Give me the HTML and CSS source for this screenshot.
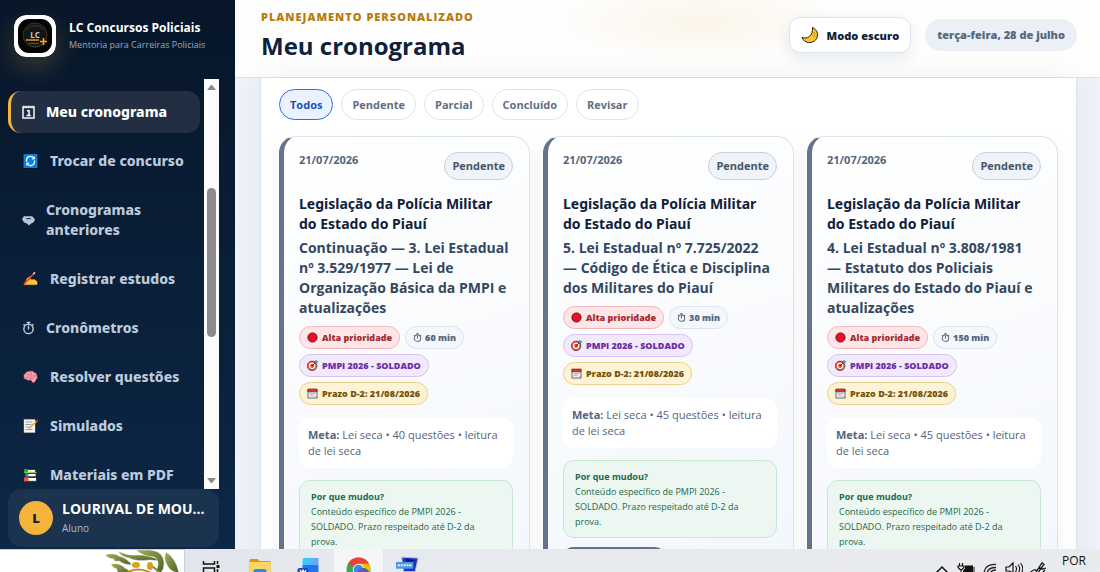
FILE: index.html
```html
<!DOCTYPE html>
<html lang="pt-BR">
<head>
  <meta charset="UTF-8">
  <meta name="viewport" content="width=device-width, initial-scale=1">
  <title>Meu cronograma</title>
  <link rel="stylesheet" href="styles.css">
</head>
<body>

<!-- icones reutilizados nos cartões -->
<svg class="sprite" aria-hidden="true">
  <symbol id="i-red" viewBox="0 0 12 12"><circle cx="6" cy="6" r="5" fill="#e81224" stroke="#5a0a10"/></symbol>
  <symbol id="i-timer" viewBox="0 0 14 14">
    <g fill="none" stroke="currentColor" stroke-width="1.6"><circle cx="7" cy="8" r="5"/><path d="M7 8.5V4.5M7 3V1M5 1h4M11 3l1.4 1.2M3 3L1.6 4.2"/></g>
  </symbol>
  <symbol id="i-target" viewBox="0 0 12 12">
    <circle cx="5.6" cy="6.4" r="5.2" fill="#e8432e" stroke="#3b1a1a" stroke-width=".6"/><circle cx="5.6" cy="6.4" r="3.6" fill="#fff"/><circle cx="5.6" cy="6.4" r="2.2" fill="#e8432e"/>
    <path d="M5.6 6.4L10 2" stroke="#222" stroke-width=".9"/><path d="M8.4 3.6V1.6L10 .2l.4 1.4 1.4.4-1.4 1.6z" fill="#31b6e7" stroke="#222" stroke-width=".4"/>
  </symbol>
  <symbol id="i-cal" viewBox="0 0 12 12">
    <path d="M1 1.500h10v9.500H1z" fill="#e9e9ee" stroke="#444" stroke-width=".8"/><path d="M1 1.200h10v3H1z" fill="#d93a2b" stroke="#5a1a12" stroke-width=".6"/>
    <path d="M3 6h6M3 8h4" stroke="#a9a9b2" stroke-width=".9"/><path d="M11 8v3H8z" fill="#9a9aa2"/>
  </symbol>
</svg>

<div class="app">
  <aside class="sidebar">
    <div class="brand">
      <svg class="logo" viewBox="0 0 42 42" role="img" aria-label="LC">
        <rect width="42" height="42" rx="12" fill="#fff"/>
        <rect x="4" y="4" width="34" height="34" rx="11" fill="#050505"/>
        <circle cx="21" cy="20" r="12" fill="#151515" stroke="#4b3d1c" stroke-width=".8"/>
        <path d="M12 15q9-9 18 0M13 29q8 6 16 0" fill="none" stroke="#3c3c3c"/>
        <text x="21" y="23" text-anchor="middle" class="logo-lc">LC</text>
        <path d="M12 25h13" stroke="#c98a14" stroke-width="2" stroke-dasharray="2 .4"/>
        <path d="M15 28.500h10" stroke="#555" stroke-width="1"/>
        <path d="M26 26.500h7M29.500 23v7" stroke="#f5b021" stroke-width="1.600"/>
      </svg>
      <div class="brand-text">
        <strong>LC Concursos Policiais</strong>
        <span>Mentoria para Carreiras Policiais</span>
      </div>
    </div>

    <div class="menu">
      <nav class="nav">
        <a href="#" class="active">
          <svg class="ico small" viewBox="0 0 13 14"><rect x="1" y="2" width="11" height="11" fill="none" stroke="#e9edf2" stroke-width="1.600"/><path d="M1 2h11" stroke="#e9edf2" stroke-width="2.400" stroke-dasharray="1.500 .8"/><path d="M5 5.800h2v4.500M4.500 10.500h4.200" fill="none" stroke="#fff" stroke-width="1.500"/></svg>
          Meu cronograma
        </a>
        <a href="#">
          <svg class="ico" viewBox="0 0 16 16"><rect x=".5" y=".5" width="15" height="15" fill="#0b7fe0" stroke="#03101f"/><path d="M4 8.800V7a4 4 0 0 1 7.500-1.500M12 7.500V9a4 4 0 0 1-7.500 1.500" fill="none" stroke="#fff" stroke-width="1.300"/><path d="M11.800 3.500V6H9.300M4.200 12.500V10h2.500" fill="none" stroke="#fff"/></svg>
          Trocar de concurso
        </a>
        <a href="#">
          <svg class="ico small" viewBox="0 0 14 14"><path d="M2 3h9l3 3.500-1.500 3-3 1.500-2 2-2-2-3.500-1.500L0 6z" fill="#b9c6d6"/><path d="M4.500 5.500h5" stroke="#22344c" stroke-width="1.200"/></svg>
          Cronogramas anteriores
        </a>
        <a href="#">
          <svg class="ico" viewBox="0 0 16 16"><path d="M.8 14.200L4 7l4-2.500 1.500 1.500L8 8h4l3.200 2.500v3.700z" fill="#ffc83d" stroke="#1d1405" stroke-width=".8"/><path d="M1.500 13L11 3" stroke="#e03a24" stroke-width="1.800"/><path d="M10.800 3.200L12.500 1.300" stroke="#ddd" stroke-width="1.600"/></svg>
          Registrar estudos
        </a>
        <a href="#">
          <svg class="ico small"><use href="#i-timer"/></svg>
          Cronômetros
        </a>
        <a href="#">
          <svg class="ico" viewBox="0 0 16 16"><path d="M1 8Q.5 5 3 4q1-2.500 4-2 3-1 4.500 1 3 .5 3 3 1.500 3-.8 5-.5 2.500-2.700 3-2 0-2.500-2.500-3 .8-4.500-.8Q1 10.500 1 8z" fill="#f59fb0" stroke="#4a1b25" stroke-width=".8"/><path d="M4 5.500q2-.5 3 1t3 .3M8 3q-.5 2 1.500 2.500M3 8.500q2-1 3.500.5t4 0M12 5.500q-1 2 .5 3" fill="none" stroke="#c9647c" stroke-width=".9"/></svg>
          Resolver questões
        </a>
        <a href="#">
          <svg class="ico" viewBox="0 0 16 16"><path d="M1 1h12v14H1z" fill="#f2f2f2" stroke="#222" stroke-width=".7"/><path d="M3 4h7M3 6.500h6M3 9h4M3 11.500h7" stroke="#9aa0a8"/><path d="M6.500 10.500L14 3.500" stroke="#e8a92c" stroke-width="1.700"/><path d="M14 3.500l1.300-1.200" stroke="#d7455b" stroke-width="1.700"/></svg>
          Simulados
        </a>
        <a href="#">
          <svg class="ico" viewBox="0 0 16 16"><path d="M2 2.500h11v3H2z" fill="#fff" stroke="#151515" stroke-width=".7"/><path d="M1.500 2h4v3.500h-4z" fill="#1fa34a"/><path d="M2 5.500h12" stroke="#a6c93b" stroke-width="1.500"/><path d="M3 6.500h10.500v3.200H3z" fill="#fff" stroke="#151515" stroke-width=".7"/><path d="M3 6.500h3v3.200H3z" fill="#3a8bbd"/><path d="M1.500 10.500H14v3.800H1.500z" fill="#fff" stroke="#151515" stroke-width=".7"/><path d="M1.500 10.500H6v3.800H1.500z" fill="#f0572b"/></svg>
          Materiais em PDF
        </a>
      </nav>
      <div class="scrollbar" aria-hidden="true">
        <i class="up"></i>
        <i class="thumb"></i>
        <i class="down"></i>
      </div>
    </div>

    <div class="user">
      <span class="avatar">L</span>
      <div class="user-text">
        <strong>LOURIVAL DE MOU...</strong>
        <span>Aluno</span>
      </div>
    </div>
  </aside>

  <main class="main">
    <header class="topbar">
      <div>
        <p class="eyebrow">PLANEJAMENTO PERSONALIZADO</p>
        <h1>Meu cronograma</h1>
      </div>
      <div class="topbar-right">
        <button type="button" class="theme-btn">
          <svg viewBox="0 0 18 18"><path d="M11.500 1.500C17 4 18 10 14.500 14 10.500 18 3.500 17.500 1 11.500 6 13.500 12.500 10 11.500 1.500z" fill="#ffc531" stroke="#2b2005" stroke-width="1"/><path d="M13 6q1.500 3-.5 5.500" fill="none" stroke="#e39c1c" stroke-width="1.200"/></svg>
          Modo escuro
        </button>
        <span class="date-pill">terça-feira, 28 de julho</span>
      </div>
    </header>

    <section class="panel">
      <div class="filters">
        <button type="button" class="active">Todos</button>
        <button type="button">Pendente</button>
        <button type="button">Parcial</button>
        <button type="button">Concluído</button>
        <button type="button">Revisar</button>
      </div>

      <div class="cards">
        <article class="card">
          <div class="card-top"><time datetime="2026-07-21">21/07/2026</time><span class="status">Pendente</span></div>
          <h3>Legislação da Polícia Militar do Estado do Piauí</h3>
          <h4>Continuação — 3. Lei Estadual nº 3.529/1977 — Lei de Organização Básica da PMPI e atualizações</h4>
          <div class="chips">
            <span class="chip red"><svg><use href="#i-red"/></svg>Alta prioridade</span>
            <span class="chip time"><svg><use href="#i-timer"/></svg>60 min</span>
            <span class="chip purple"><svg><use href="#i-target"/></svg>PMPI 2026 - SOLDADO</span>
            <span class="chip yellow"><svg><use href="#i-cal"/></svg>Prazo D-2: 21/08/2026</span>
          </div>
          <p class="goal"><b>Meta:</b> Lei seca • 40 questões • leitura de lei seca</p>
          <div class="why"><strong>Por que mudou?</strong>Conteúdo específico de PMPI 2026 - SOLDADO. Prazo respeitado até D-2 da prova.</div>
          <button type="button" class="start" aria-label="Iniciar"></button>
        </article>

        <article class="card">
          <div class="card-top"><time datetime="2026-07-21">21/07/2026</time><span class="status">Pendente</span></div>
          <h3>Legislação da Polícia Militar do Estado do Piauí</h3>
          <h4>5. Lei Estadual nº 7.725/2022 — Código de Ética e Disciplina dos Militares do Piauí</h4>
          <div class="chips">
            <span class="chip red"><svg><use href="#i-red"/></svg>Alta prioridade</span>
            <span class="chip time"><svg><use href="#i-timer"/></svg>30 min</span>
            <span class="chip purple"><svg><use href="#i-target"/></svg>PMPI 2026 - SOLDADO</span>
            <span class="chip yellow"><svg><use href="#i-cal"/></svg>Prazo D-2: 21/08/2026</span>
          </div>
          <p class="goal"><b>Meta:</b> Lei seca • 45 questões • leitura de lei seca</p>
          <div class="why"><strong>Por que mudou?</strong>Conteúdo específico de PMPI 2026 - SOLDADO. Prazo respeitado até D-2 da prova.</div>
          <button type="button" class="start" aria-label="Iniciar"></button>
        </article>

        <article class="card">
          <div class="card-top"><time datetime="2026-07-21">21/07/2026</time><span class="status">Pendente</span></div>
          <h3>Legislação da Polícia Militar do Estado do Piauí</h3>
          <h4>4. Lei Estadual nº 3.808/1981 — Estatuto dos Policiais Militares do Estado do Piauí e atualizações</h4>
          <div class="chips">
            <span class="chip red"><svg><use href="#i-red"/></svg>Alta prioridade</span>
            <span class="chip time"><svg><use href="#i-timer"/></svg>150 min</span>
            <span class="chip purple"><svg><use href="#i-target"/></svg>PMPI 2026 - SOLDADO</span>
            <span class="chip yellow"><svg><use href="#i-cal"/></svg>Prazo D-2: 21/08/2026</span>
          </div>
          <p class="goal"><b>Meta:</b> Lei seca • 45 questões • leitura de lei seca</p>
          <div class="why"><strong>Por que mudou?</strong>Conteúdo específico de PMPI 2026 - SOLDADO. Prazo respeitado até D-2 da prova.</div>
          <button type="button" class="start" aria-label="Iniciar"></button>
        </article>
      </div>
    </section>
  </main>
</div>

<!-- barra de tarefas -->
<footer class="taskbar">
  <div class="search">
    <svg viewBox="0 0 80 23">
      <defs><linearGradient id="leaf" x1="0" y1="0" x2="1" y2="1"><stop offset="0" stop-color="#a3ae5e"/><stop offset="1" stop-color="#4c5f22"/></linearGradient></defs>
      <g fill="url(#leaf)" stroke="#fff" stroke-width=".5">
        <path d="M1 5q8-3 14 1 8 2 13 9-8 0-13-4Q9 12 10 9 5 9 1 5z"/>
        <path d="M7 14q8-2 14 4 5 2 6 6h-9q-6-1-5-5-5-1-6-5z"/>
        <path d="M14 1q9 5 20 4 12-1 22 6l-10-1q-14 2-21-2-8-1-11-7z"/>
        <path d="M32 0h14q13 1 14 12 1 7-4 12l-4-3q5-10-2-14-10 0-18-7z"/>
        <path d="M62 2q10 6 13 21-9-1-12-8-4-6-1-13z"/>
      </g>
      <path d="M22 23q12-7 25 0" fill="none" stroke="#b8861c" stroke-width="2"/>
      <path d="M47 16q5 2 8 7" fill="none" stroke="#8a9440" stroke-width="2"/>
      <ellipse cx="32" cy="15" rx="4" ry="3" fill="#d9a514"/><ellipse cx="46" cy="16" rx="3" ry="4" fill="#d2a01a"/>
    </svg>
  </div>
  <div class="apps">
    <span><svg viewBox="0 0 20 23"><g fill="none" stroke="#111" stroke-width="1.500"><path d="M2 12v3h11v-3M2 24v-5h11v5M16 12v3M16 20v4"/></g><path d="M15 16h3v3h-3z" fill="#111"/></svg></span>
    <span><svg viewBox="0 0 24 23"><path d="M1 12q0-2 1-2h7l2 2h11v11H1z" fill="#d79a0e"/><path d="M1 13h21v10H1z" fill="#ffd466"/><path d="M5 23v-2l2-1h9l2 1v2z" fill="#2a8be0"/></svg></span>
    <span><svg viewBox="0 0 24 23"><defs><linearGradient id="word" x1="0" x2="1"><stop offset="0" stop-color="#2fd2fa"/><stop offset="1" stop-color="#6fa0ff"/></linearGradient></defs><path d="M5 11q0-2 2-2h14v7H5z" fill="url(#word)"/><path d="M5 16h16v7H5z" fill="#1e78e8"/><rect x="0" y="19" width="11" height="8" rx="2" fill="#1647c8"/><path d="M2.500 21l1.500 3 1.500-3 1.500 3 1.500-3" fill="none" stroke="#fff" stroke-width="1.200"/></svg></span>
    <span class="on"><svg viewBox="0 0 26 23"><circle cx="13" cy="21" r="12.500" fill="#34a853"/><path d="M2 15A12.500 12.500 0 0 1 24 15L13 21z" fill="#ea4335"/><path d="M13 15h11q2 4 1 8H13z" fill="#fbbc05"/><circle cx="13" cy="21" r="6" fill="#fff"/><circle cx="13" cy="21" r="5" fill="#4285f4"/><circle cx="18" cy="25" r="6" fill="#5461a5"/></svg></span>
    <span><svg viewBox="0 0 26 23"><path d="M7 8l17 1-3 14H9z" fill="#1c35c4" stroke="#b4bccb"/><path d="M11 10l11 1-9 3z" fill="#07128c"/><path d="M1 13h18v7H1z" fill="#4c9be2"/><path d="M3 16.500h14" stroke="#e8f4ff" stroke-width="2" stroke-dasharray="2 1"/></svg></span>
  </div>
  <div class="tray">
    <svg viewBox="0 0 18 23"><path d="M3 24l6-6 6 6" fill="none" stroke="#111" stroke-width="1.500"/></svg>
    <svg viewBox="0 0 18 23"><path d="M2.500 14v3M5.500 14v3M1 17h6v1.500l-2 2H3l-2-2zM4 20v4" fill="none" stroke="#111" stroke-width="1.200"/><path d="M8 16.500h8V24H6v-2.500l2-2z" fill="#111"/><path d="M17 18v5" stroke="#111"/></svg>
    <svg viewBox="0 0 18 23"><g fill="none" stroke="#222" stroke-width="1.300"><path d="M3 24Q4 15 15 15.500M6 24q1-5.500 9-5.500M9.500 24q1-3 5.500-3"/></g></svg>
    <svg viewBox="0 0 18 23"><path d="M1 18h3l4-4v10l-4-2H1z" fill="none" stroke="#111" stroke-width="1.200"/><path d="M10.500 17q2 2.500 0 6M13 15.500q3 4 .5 8M15.500 14q4 5 1 10" fill="none" stroke="#111" stroke-width="1.100"/></svg>
    <svg viewBox="0 0 18 23"><path d="M1 24q4-5 7-2M7 23l6-9 2 1.500-6 8M10 19l4 1 3-1M14 23l2-2" fill="none" stroke="#111" stroke-width="1.300"/></svg>
    <span>POR</span>
  </div>
</footer>

</body>
</html>
```
FILE: styles.css
```css
* {
  box-sizing: border-box;
}

body {
  margin: 0;
  height: 100vh;
  display: flex;
  flex-direction: column;
  overflow: hidden;
  font-family: "Open Sans", "Noto Sans", sans-serif;
  font-size: 14px;
  color: #10213a;
}

h1, h3, h4, p {
  margin: 0;
}

a {
  color: inherit;
  text-decoration: none;
}

button {
  font-family: inherit;
  cursor: pointer;
}

.sprite {
  display: none;
}

.app {
  flex: 1;
  min-height: 0;
  display: grid;
  grid-template-columns: 235px 1fr;
}

/* menu lateral */
.sidebar {
  min-height: 0;
  display: flex;
  flex-direction: column;
  padding: 15px 16px 2px 8px;
  background: linear-gradient(180deg, #071629, #0c2747);
  color: #bccbdc;
}

.brand {
  display: flex;
  align-items: center;
  gap: 13px;
  padding: 0 0 22px 6px;
}

.logo {
  width: 42px;
  height: 42px;
  flex: none;
  border-radius: 12px;
  box-shadow: 0 10px 26px rgba(244, 180, 60, 0.22);
}

.logo-lc {
  font-size: 8px;
  font-weight: 700;
  fill: #c9c9c9;
}

.brand-text {
  display: flex;
  flex-direction: column;
  white-space: nowrap;
}

.brand-text strong {
  font-size: 12px;
  line-height: 18px;
  color: #fff;
}

.brand-text span {
  font-size: 9px;
  line-height: 16px;
  color: #93a9c4;
}

.menu {
  flex: 1;
  min-height: 0;
  display: flex;
  gap: 4px;
}

.nav {
  flex: 1;
  display: flex;
  flex-direction: column;
  gap: 7px;
  padding-top: 12px;
  overflow: hidden;
}

.nav a {
  flex: none;
  display: flex;
  align-items: center;
  gap: 11px;
  padding: 11px 10px 11px 14px;
  border-radius: 13px;
  font-family: "Noto Sans", "Open Sans", sans-serif;
  font-size: 14px;
  font-weight: 800;
  line-height: 20px;
}

.nav a.active {
  background: #222f42;
  color: #fff;
  padding-left: 11px;
  border-left: 3px solid #f3b43c;
}

.ico {
  width: 17px;
  height: 16px;
  flex: none;
}

.ico.small {
  width: 13px;
  height: 14px;
}

.scrollbar {
  width: 15px;
  display: flex;
  flex-direction: column;
  align-items: center;
  padding: 6px 0;
  background: #fcfcfc;
}

.scrollbar i {
  width: 9px;
}

.scrollbar .up {
  border: 4px solid transparent;
  border-top: 0;
  border-bottom: 5px solid #8a8a8a;
}

.scrollbar .down {
  border: 4px solid transparent;
  border-bottom: 0;
  border-top: 5px solid #8a8a8a;
  margin-top: auto;
}

.scrollbar .thumb {
  height: 149px;
  margin-top: 98px;
  border-radius: 5px;
  background: #8b8b8b;
}

.user {
  display: flex;
  align-items: center;
  gap: 9px;
  padding: 10px 11px;
  border-radius: 14px;
  background: #1b334e;
}

.avatar {
  width: 34px;
  height: 34px;
  flex: none;
  border-radius: 50%;
  background: #f4b43c;
  color: #10213a;
  font-weight: 800;
  font-size: 13px;
  line-height: 34px;
  text-align: center;
}

.user-text {
  min-width: 0;
  display: flex;
  flex-direction: column;
  white-space: nowrap;
}

.user-text strong {
  font-size: 14px;
  line-height: 20px;
  color: #fff;
}

.user-text span {
  font-size: 10px;
  line-height: 18px;
  color: #a9bbd0;
}

/* conteudo */
.main {
  min-width: 0;
  min-height: 0;
  display: flex;
  flex-direction: column;
  overflow: hidden;
  background: #eff3f9;
}

.topbar {
  flex: none;
  display: flex;
  justify-content: space-between;
  height: 78px;
  padding: 8px 23px 0 26px;
  border-bottom: 1px solid #dbe3ed;
  background: radial-gradient(ellipse 150px 42px at 465px 22px, #fbf5e9, transparent), #fefefe;
}

.eyebrow {
  font-size: 11px;
  font-weight: 800;
  letter-spacing: 1px;
  line-height: 18px;
  color: #b97c0d;
}

h1 {
  font-size: 24px;
  line-height: 40px;
  color: #10213a;
}

.topbar-right {
  display: flex;
  align-items: center;
  align-self: flex-start;
  gap: 14px;
  padding-top: 9px;
}

.theme-btn {
  display: flex;
  align-items: center;
  gap: 8px;
  height: 36px;
  padding: 0 11px;
  border: 1px solid #dbe5f1;
  border-radius: 11px;
  background: #fff;
  box-shadow: 0 6px 16px rgba(16, 33, 58, 0.09);
  color: #10213a;
  font-size: 11px;
  font-weight: 800;
}

.theme-btn svg {
  width: 18px;
  height: 18px;
}

.date-pill {
  padding: 6px 12px;
  border-radius: 16px;
  background: #ebf0f7;
  color: #55687f;
  font-size: 11px;
  font-weight: 800;
  line-height: 20px;
}

.panel {
  flex: none;
  margin: 0 23px 0 25px;
  padding: 11px 18px;
  border: 1px solid #dbe3ed;
  border-top: 0;
  background: #fff;
  box-shadow: 0 0 28px rgba(16, 33, 58, 0.06);
}

.filters {
  display: flex;
  gap: 8px;
  margin-bottom: 16px;
}

.filters button {
  height: 31px;
  padding: 0 10px;
  border: 1px solid #dbe3ed;
  border-radius: 16px;
  background: #fff;
  color: #5d6f86;
  font-size: 11px;
  font-weight: 700;
}

.filters button.active {
  border-color: #2b6fe8;
  background: #ebf2ff;
  color: #164fc0;
}

.cards {
  display: grid;
  grid-template-columns: repeat(3, 1fr);
  align-items: start;
  gap: 13px;
}

.card {
  padding: 15px 16px 15px 15px;
  border: 1px solid #d9e4ef;
  border-left: 5px solid #64748b;
  border-radius: 17px;
  background: linear-gradient(160deg, #fff, #f2f6fb);
  box-shadow: 0 6px 20px rgba(16, 33, 58, 0.05);
}

.card-top {
  display: flex;
  justify-content: space-between;
  align-items: flex-start;
  margin-bottom: 14px;
}

.card-top time {
  font-size: 11px;
  font-weight: 700;
  line-height: 16px;
  color: #55657c;
}

.status {
  padding: 0 7px;
  border: 1px solid #c8d0dc;
  border-radius: 14px;
  background: #f0f4f9;
  color: #44546a;
  font-size: 11px;
  font-weight: 700;
  line-height: 26px;
}

.card h3 {
  font-family: "Noto Sans", "Open Sans", sans-serif;
  font-size: 14px;
  line-height: 20px;
  color: #10213a;
}

.card h4 {
  margin-top: 4px;
  padding-right: 3px;
  font-size: 14px;
  line-height: 20px;
  color: #34475f;
}

.chips {
  display: flex;
  flex-wrap: wrap;
  gap: 5px;
  margin-top: 8px;
}

.chip {
  display: flex;
  align-items: center;
  gap: 4px;
  padding: 0 7px;
  border: 1px solid #dbe4ee;
  border-radius: 12px;
  background: #f4f7fb;
  color: #53657c;
  font-size: 9px;
  font-weight: 800;
  line-height: 21px;
}

.chip svg {
  width: 11px;
  height: 11px;
}

.chip.time {
  gap: 3px;
}

.chip.time svg {
  width: 9px;
  height: 9px;
}

.chip.red {
  border-color: #f3b6bb;
  background: #fee5e7;
  color: #a32b34;
}

.chip.purple {
  border-color: #d9c2f0;
  background: #f3e9fd;
  color: #6a2fa5;
}

.chip.yellow {
  border-color: #ecd08c;
  background: #fff3d6;
  color: #7a5006;
}

.goal {
  margin: 13px 0 12px;
  padding: 9px;
  border-radius: 11px;
  background: #fff;
  color: #53657c;
  font-size: 11px;
  line-height: 16px;
}

.why {
  padding: 8px 11px;
  border: 1px solid #c5e8d5;
  border-radius: 11px;
  background: #ecf7f1;
  color: #23684a;
  font-size: 9px;
  line-height: 15px;
}

.why strong {
  display: block;
}

.start {
  display: block;
  width: 102px;
  height: 34px;
  margin-top: 9px;
  border: 0;
  border-radius: 10px;
  background: #64748b;
}

/* barra de tarefas */
.taskbar {
  flex: none;
  display: flex;
  height: 23px;
  overflow: hidden;
  background: linear-gradient(90deg, #dbe2ec, #e6e9ed 30%, #e9ebed);
}

.search {
  width: 185px;
  display: flex;
  justify-content: flex-end;
  border-top: 1px solid #c9ccd0;
  border-right: 1px solid #c9ccd0;
  background: #fff;
}

.search svg {
  width: 80px;
  height: 23px;
}

.apps {
  display: flex;
  padding-left: 2px;
}

.apps span {
  width: 49px;
  display: flex;
  justify-content: center;
}

.apps .on {
  background: #f5f6f8;
}

.apps svg {
  width: 25px;
  height: 23px;
}

.tray {
  display: flex;
  gap: 6px;
  margin-left: auto;
  padding-right: 14px;
}

.tray svg {
  width: 18px;
  height: 23px;
}

.tray span {
  margin-left: 9px;
  font-size: 12px;
  line-height: 24px;
  color: #111;
}
```
